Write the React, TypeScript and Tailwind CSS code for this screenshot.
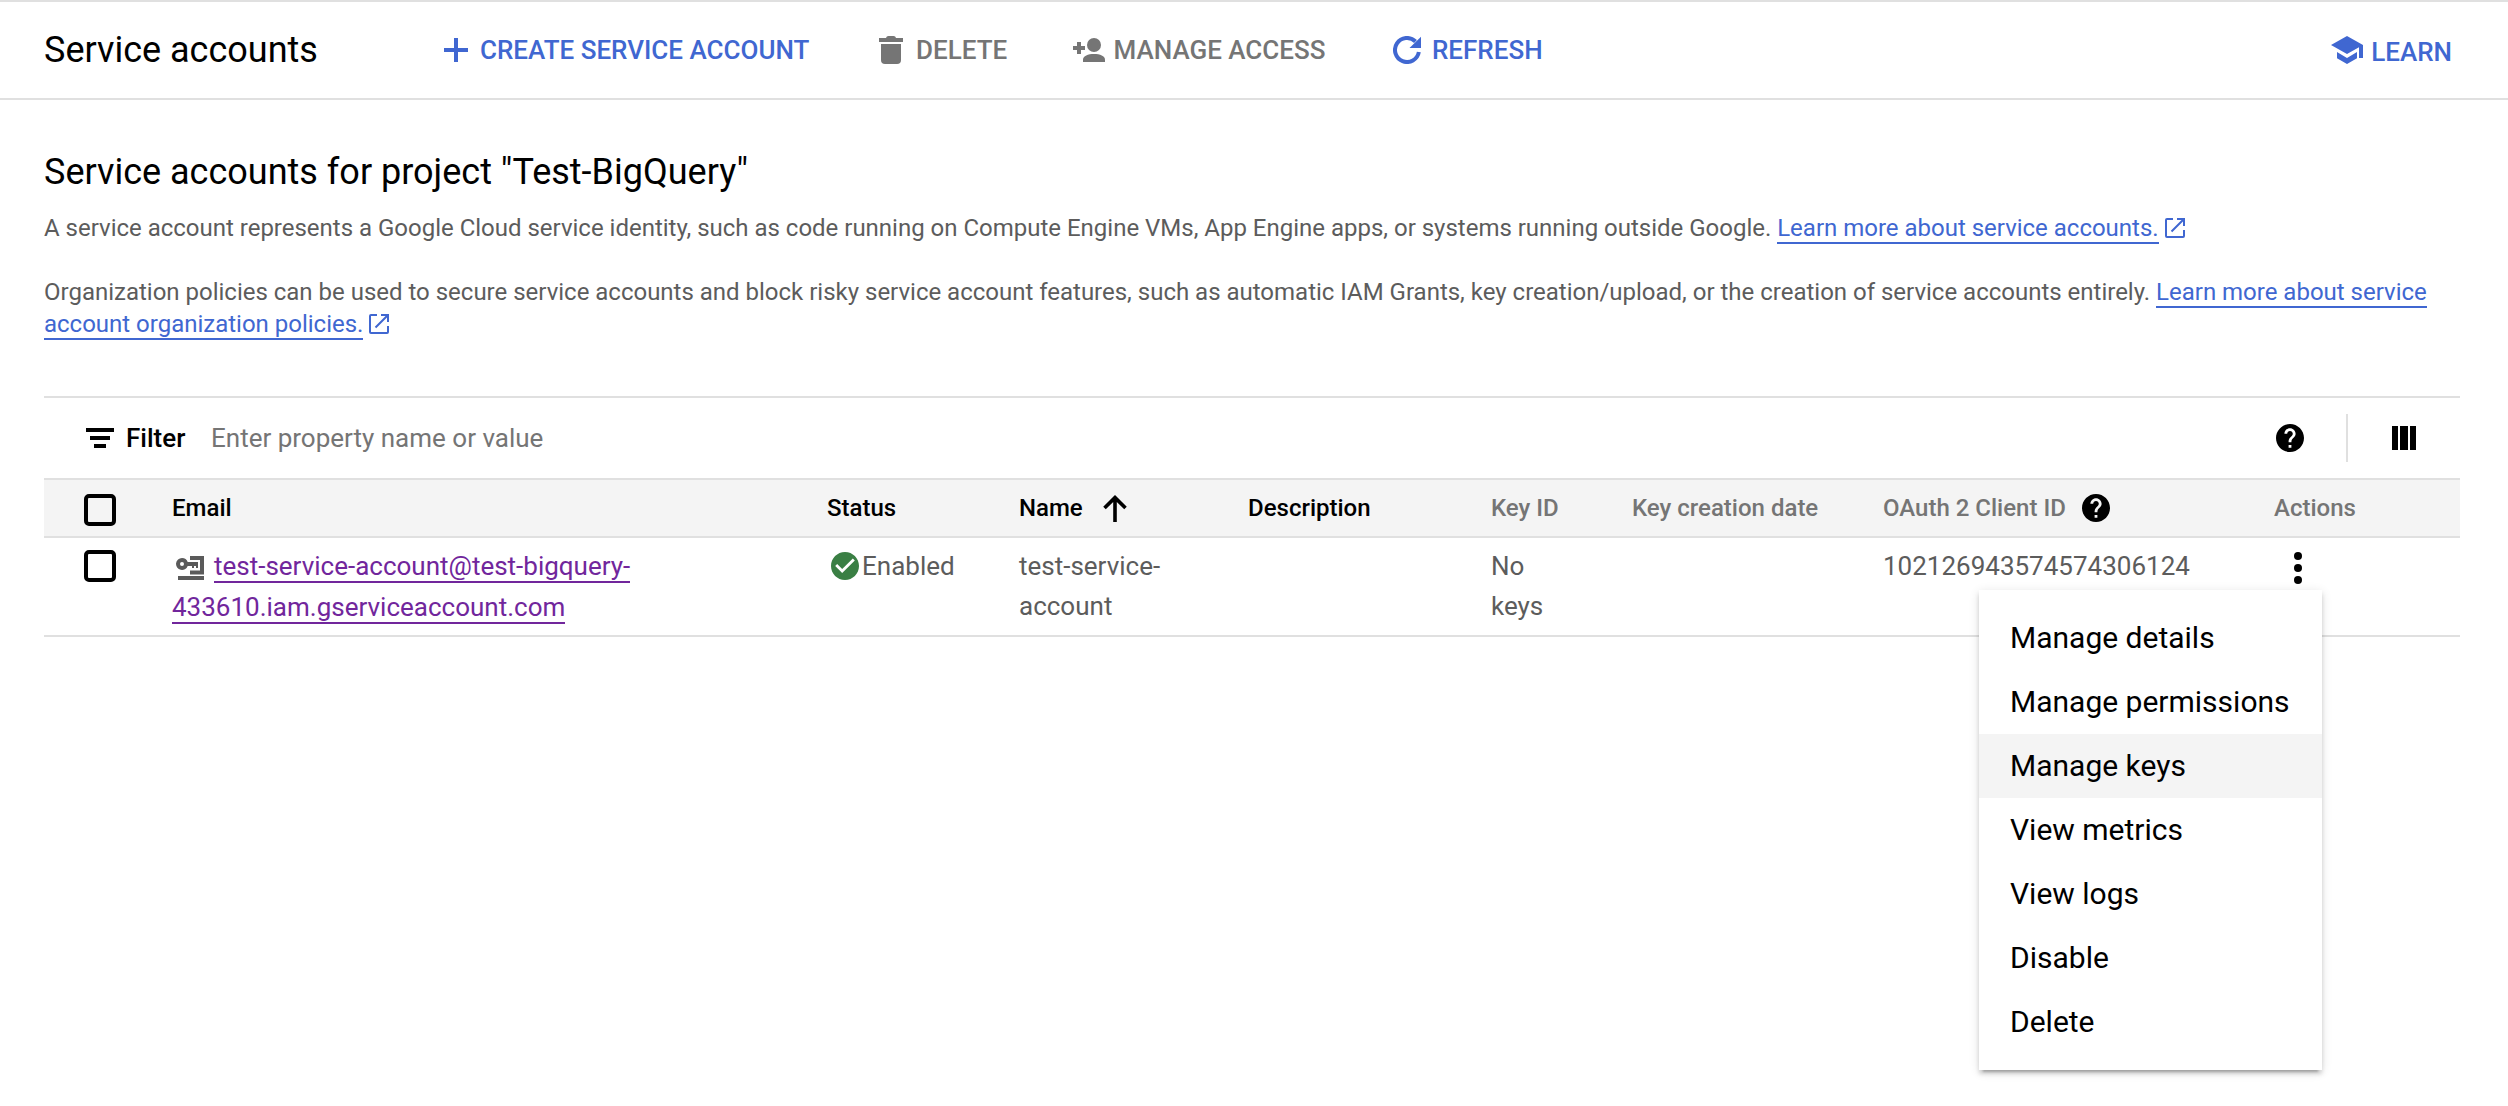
import React, { type ReactNode } from 'react';

const PlusIcon = () => (
  <svg width="24" height="24" viewBox="0 0 24 24" fill="currentColor" className="shrink-0">
    <path d="M10 0h4v10h10v4H14v10h-4V14H0v-4h10z" />
  </svg>
);

const TrashIcon = () => (
  <svg width="24" height="28" viewBox="0 0 24 28" fill="currentColor" className="shrink-0">
    <path d="M0 2h7c.5-1.300 1-2 2.500-2h5c1.500 0 2 .7 2.500 2h7v4H0z" />
    <path d="M2 8h20v16a4 4 0 0 1-4 4H6a4 4 0 0 1-4-4z" />
  </svg>
);

const PersonAddIcon = () => (
  <svg width="32" height="24" viewBox="0 0 32 24" fill="currentColor" className="shrink-0">
    <path d="M4 4h4v4h4v4H8v4H4v-4H0V8h4z" />
    <circle cx="21" cy="7" r="7" />
    <path d="M10 24v-2.500c0-3.500 5-5.500 11-5.500s11 2 11 5.500V24z" />
  </svg>
);

const RefreshIcon = () => (
  <svg width="28" height="28" viewBox="0 0 28 28" fill="none" className="shrink-0">
    <path d="M22.500 5.500A12 12 0 1 0 25.840 16" stroke="currentColor" strokeWidth="4" />
    <path d="M28 .8V12H16.500z" fill="currentColor" />
  </svg>
);

const LearnIcon = () => (
  <svg width="32" height="28" viewBox="0 0 32 28" fill="currentColor" className="shrink-0">
    <path d="M16 0l16 9v13h-4V11.300L16 18 0 9z" />
    <path d="M6 16l10 6 10-6v6.200L16 28 6 22.200z" />
  </svg>
);

const OpenInNewIcon = () => (
  <svg width="20" height="20" viewBox="0 0 20 20" fill="none" stroke="currentColor" strokeWidth="2" className="ml-1.5 inline-block align-[-2px] text-[#4067d1]">
    <path d="M8 1H2a1 1 0 0 0-1 1v16a1 1 0 0 0 1 1h16a1 1 0 0 0 1-1v-6" />
    <path d="M12 1h7v7M19 1L6.500 13.500" />
  </svg>
);

const FilterIcon = () => (
  <svg width="28" height="20" viewBox="0 0 28 20" className="shrink-0">
    <path d="M0 0h28v4H0zM4 8h20v4H4zM8 16h12v4H8z" />
  </svg>
);

const HelpIcon = () => (
  <svg width="28" height="28" viewBox="2 2 20 20" className="shrink-0 text-black" fill="currentColor">
    <path d="M12 2C6.480 2 2 6.480 2 12s4.480 10 10 10 10-4.480 10-10S17.520 2 12 2zm1 17h-2v-2h2v2zm2.070-7.750l-.9.920C13.450 12.900 13 13.500 13 15h-2v-.5c0-1.100.450-2.100 1.170-2.830l1.240-1.260c.370-.360.590-.860.590-1.410 0-1.100-.9-2-2-2s-2 .9-2 2H8c0-2.210 1.790-4 4-4s4 1.790 4 4c0 .880-.360 1.680-.930 2.250z" />
  </svg>
);

const ColumnsIcon = () => (
  <svg width="24" height="24" viewBox="0 0 24 24" className="shrink-0">
    <path d="M0 0h6v24H0zM8 0h8v24H8zM18 0h6v24h-6z" />
  </svg>
);

const ArrowUpIcon = () => (
  <svg width="24" height="27" viewBox="0 0 24 27" fill="none" stroke="currentColor" strokeWidth="3.600" className="shrink-0">
    <path d="M12 27V3M1.500 13L12 2.600 22.500 13" />
  </svg>
);

const CheckCircleIcon = () => (
  <svg width="28" height="28" viewBox="2 2 20 20" className="shrink-0 text-[#3a7f44]" fill="currentColor">
    <path d="M12 2C6.480 2 2 6.480 2 12s4.480 10 10 10 10-4.480 10-10S17.520 2 12 2zm-2 15l-5-5 1.410-1.410L10 14.170l7.590-7.590L19 8l-9 9z" />
  </svg>
);

const ServiceAccountIcon = () => (
  <svg width="28" height="24" viewBox="0 0 28 24" fill="#5a5a5a" className="mr-2.5 ml-1 inline-block align-[-5px]">
    <path d="M14 0h14v18.500H14v-4h10V4H14z" />
    <path d="M2 20h26v4H2z" />
    <path fillRule="evenodd" d="M6 2a6 6 0 0 1 5.700 4H22v6h-2v-2h-2v2h-2v-2h-4.300A6 6 0 1 1 6 2zm0 4a2 2 0 1 0 0 4 2 2 0 0 0 0-4z" />
  </svg>
);

const MoreIcon = () => (
  <svg width="8" height="32" viewBox="0 0 8 32" className="shrink-0">
    <circle cx="4" cy="4" r="4" />
    <circle cx="4" cy="16" r="4" />
    <circle cx="4" cy="28" r="4" />
  </svg>
);

const Checkbox = () => <span className="block size-8 rounded-[5px] border-4 border-black" />;

const Link = ({ children }: { children: ReactNode }) => (
  <a href="#" className="border-b-2 border-[#4067d1] text-[#4067d1]">{children}</a>
);

const columns = 'grid grid-cols-[128px_655px_192px_229px_243px_141px_251px_391px_1fr]';

const menuItems = ['Manage details', 'Manage permissions', 'Manage keys', 'View metrics', 'View logs', 'Disable', 'Delete'];

export default function App() {
  return (
    <div className="min-h-screen bg-white font-[Roboto,sans-serif] text-black">
      <header className="flex h-[100px] items-center border-y-2 border-[#e0e0e0] pr-[56px] pl-[44px]">
        <h1 className="w-[400px] text-[36px] leading-10">Service accounts</h1>
        <div className="flex items-center text-[26px] leading-8 font-medium whitespace-nowrap text-[#4067d1]">
          <button className="flex w-[435px] items-center gap-3"><PlusIcon />CREATE SERVICE ACCOUNT</button>
          <button className="flex w-[194px] items-center gap-[13px] text-[#757575]"><TrashIcon />DELETE</button>
          <button className="flex w-[320px] items-center gap-[8.500px] text-[#757575]"><PersonAddIcon />MANAGE ACCESS</button>
          <button className="flex items-center gap-[11px]"><RefreshIcon />REFRESH</button>
        </div>
        <button className="ml-auto flex items-center gap-2 text-[26px] leading-8 font-medium text-[#4067d1]">
          <LearnIcon /><span className="pt-[3px]">LEARN</span>
        </button>
      </header>

      <main className="pt-[52px] pr-[48px] pl-[44px]">
        <h2 className="text-[36px] leading-10">Service accounts for project "Test-BigQuery"</h2>
        <p className="mt-5 text-[24px] leading-8 tracking-[-0.008px] text-[#5c5c5c]">
          A service account represents a Google Cloud service identity, such as code running on Compute Engine VMs, App
          Engine apps, or systems running outside Google. <Link>Learn more about service accounts.</Link>
          <OpenInNewIcon />
        </p>
        <p className="mt-8 text-[24px] leading-8 tracking-[-0.006px] text-[#5c5c5c]">
          Organization policies can be used to secure service accounts and block risky service account features, such as
          automatic IAM Grants, key creation/upload, or the creation of service accounts entirely.{' '}
          <Link>Learn more about service account organization policies.</Link>
          <OpenInNewIcon />
        </p>

        <section className="mt-14 border-t-2 border-[#e0e0e0]">
          <div className="flex h-20 items-center pr-[44px] pl-[42px] text-[26px] leading-8">
            <FilterIcon />
            <span className="ml-3 w-[85px] font-medium">Filter</span>
            <span className="text-[#757575]">Enter property name or value</span>
            <div className="ml-auto flex items-center">
              <HelpIcon />
              <span className="mr-[44px] ml-[42px] h-12 w-0.5 bg-[#e0e0e0]" />
              <ColumnsIcon />
            </div>
          </div>

          <div className={`${columns} h-[60px] items-center border-y-2 border-[#e0e0e0] bg-[#f4f4f4] text-[24px] leading-8 font-medium`}>
            <div className="pt-1 pl-10"><Checkbox /></div>
            <div>Email</div>
            <div>Status</div>
            <div className="flex items-center gap-[20px]">Name<ArrowUpIcon /></div>
            <div>Description</div>
            <div className="text-[#757575]">Key ID</div>
            <div className="text-[#757575]">Key creation date</div>
            <div className="flex items-center gap-4 text-[#757575]">OAuth 2 Client ID<HelpIcon /></div>
            <div className="text-[#757575]">Actions</div>
          </div>

          <div className={`${columns} h-[99px] items-start border-b-2 border-[#e0e0e0] text-[26px] leading-10 text-[#5c5c5c]`}>
            <div className="pt-3 pl-10"><Checkbox /></div>
            <div className="pt-2 leading-[41px]">
              <ServiceAccountIcon />
              <a href="#" className="border-b-2 border-[#71269c] text-[#71269c]">
                test-service-account@test-bigquery-<wbr />433610.iam.gserviceaccount.com
              </a>
            </div>
            <div className="flex items-center gap-[3px] pt-2 pl-1"><CheckCircleIcon />Enabled</div>
            <div className="w-[200px] pt-2">test-service-account</div>
            <div />
            <div className="w-20 pt-2">No keys</div>
            <div />
            <div className="pt-2">102126943574574306124</div>
            <div className="relative pt-3.5 pl-5 text-black">
              <MoreIcon />
              <ul className="absolute top-[52px] -left-[295px] w-[343px] bg-white py-4 text-[30px] leading-[64px] shadow-[0_6px_2px_-4px_rgba(0,0,0,0.2),0_4px_4px_rgba(0,0,0,0.14),0_2px_10px_rgba(0,0,0,0.12)]">
                {menuItems.map((item) => (
                  <li key={item} className={item === 'Manage keys' ? 'bg-[#f4f4f4] pl-[31px]' : 'pl-[31px]'}>{item}</li>
                ))}
              </ul>
            </div>
          </div>
        </section>
      </main>
    </div>
  );
}
